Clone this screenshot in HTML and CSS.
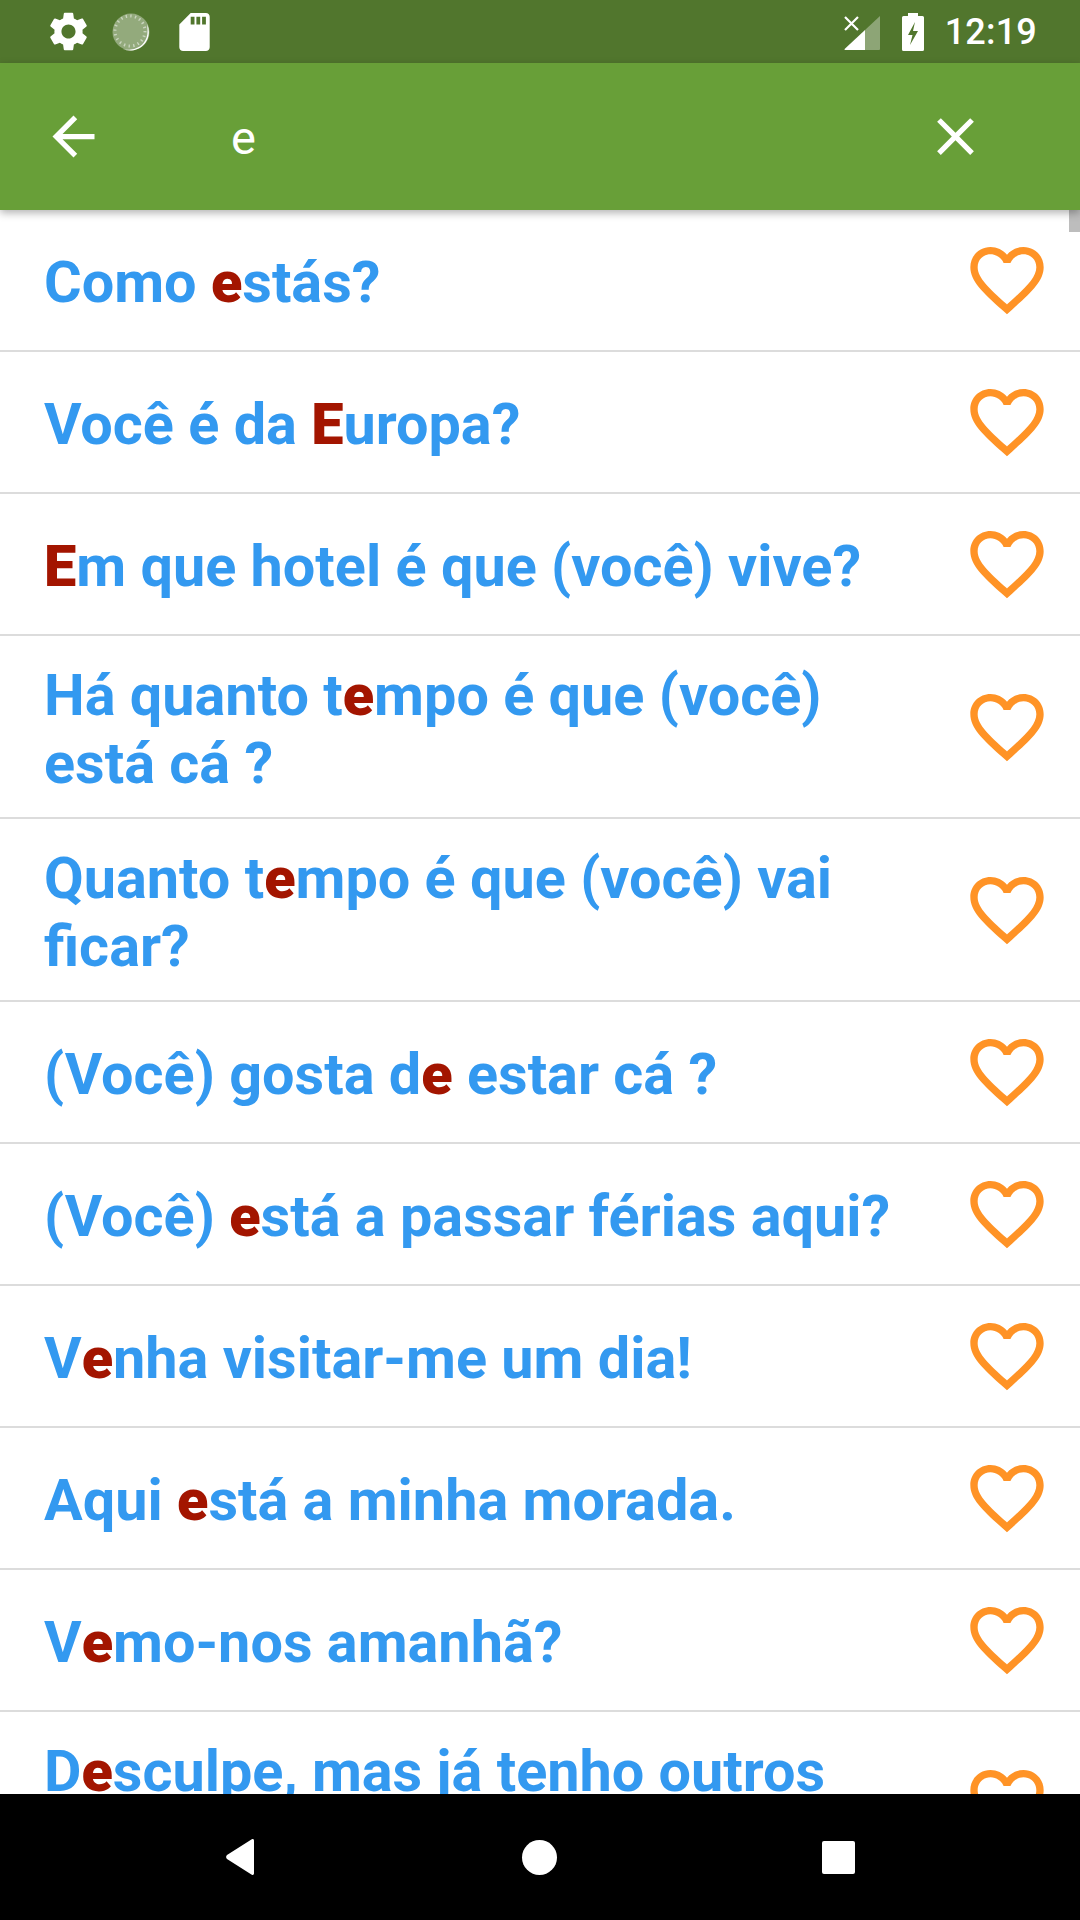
FILE: index.html
```html
<!DOCTYPE html>
<html lang="pt">
<head>
    <meta charset="utf-8"/>
    <title>Frases</title>
    <link rel="stylesheet" href="styles.css">
</head>
<body>
    <svg class="defs" width="0" height="0">
        <defs>
            <path id="heart" d="M16.5 3c-1.74 0-3.41.81-4.5 2.09C10.91 3.81 9.24 3 7.5 3 4.42 3 2 5.42 2 8.5c0 3.78 3.4 6.86 8.55 11.54L12 21.35l1.45-1.32C18.6 15.36 22 12.28 22 8.5 22 5.42 19.58 3 16.5 3zm-4.4 15.55l-.1.1-.1-.1C7.14 14.24 4 11.39 4 8.5 4 6.5 5.5 5 7.5 5c1.54 0 3.04.99 3.57 2.36h1.87C13.46 5.99 14.96 5 16.5 5c2 0 3.5 1.5 3.5 3.5 0 2.89-3.14 5.74-7.9 10.05z"/>
        </defs>
    </svg>
    <div class="screen">
        <div class="status-bar">
            <svg class="ic-gear" viewBox="0 0 24 24"><path d="M19.14 12.94c.04-.3.06-.61.06-.94 0-.32-.02-.64-.07-.94l2.03-1.58c.18-.14.23-.41.12-.61l-1.92-3.32c-.12-.22-.37-.29-.59-.22l-2.39.96c-.5-.38-1.03-.7-1.62-.94l-.36-2.54c-.04-.24-.24-.41-.48-.41h-3.84c-.24 0-.43.17-.47.41l-.36 2.54c-.59.24-1.13.57-1.62.94l-2.39-.96c-.22-.08-.47 0-.59.22L2.74 8.87c-.12.21-.08.47.12.61l2.03 1.58c-.05.3-.09.63-.09.94s.02.64.07.94l-2.03 1.58c-.18.14-.23.41-.12.61l1.92 3.32c.12.22.37.29.59.22l2.39-.96c.5.38 1.03.7 1.62.94l.36 2.54c.05.24.24.41.48.41h3.84c.24 0 .44-.17.47-.41l.36-2.54c.59-.24 1.13-.56 1.62-.94l2.39.96c.22.08.47 0 .59-.22l1.92-3.32c.12-.22.07-.47-.12-.61l-2.01-1.58zM12 15.6c-1.98 0-3.6-1.62-3.6-3.6s1.62-3.6 3.6-3.6 3.6 1.62 3.6 3.6-1.62 3.6-3.6 3.6z"/></svg>
            <svg class="ic-sync" viewBox="0 0 38 38">
                <circle cx="19" cy="19" r="18.5" fill="#fff" fill-opacity=".38"/>
                <circle cx="18" cy="18" r="15" fill="none" stroke="#fff" stroke-opacity=".5" stroke-width="3" stroke-dasharray="1.4 3.3"/>
                <path d="M35 11a18.500 18.500 0 0 1-24 25c3 .8 5 .8 8 .4 9-1 15-7 16.300-15 .4-4 .3-7-.3-10.400z" fill="#fff"/>
            </svg>
            <svg class="ic-sd" viewBox="4 2 16 20"><path d="M18 2h-8L4.020 8 4 20c0 1.100.9 2 2 2h12c1.100 0 2-.9 2-2V4c0-1.100-.9-2-2-2zm-6 6h-2V4h2v4zm3 0h-2V4h2v4zm3 0h-2V4h2v4z"/></svg>
            <div class="status-spacer"></div>
            <svg class="ic-signal" viewBox="0 0 36 36">
                <path d="M36 1v33a1 1 0 0 1-1 1H21V15z" fill="#fff" fill-opacity=".35"/>
                <path d="M21 15v20H1a.6.6 0 0 1-.4-1z" fill="#fff"/>
                <path d="M1 2l13 13M14 2L1 15" stroke="#fff" stroke-width="2.2" fill="none"/>
            </svg>
            <svg class="ic-battery" viewBox="0 0 22 38"><path fill-rule="evenodd" d="M6 0h10v3h4.500a1.500 1.500 0 0 1 1.500 1.500v32a1.500 1.500 0 0 1-1.500 1.500h-19A1.500 1.500 0 0 1 0 36.500v-32A1.500 1.500 0 0 1 1.500 3H6zM13 9l-7 13h4.500L8 32l8-14h-5z"/></svg>
            <span class="clock">12:19</span>
        </div>
        <div class="app-bar">
            <svg class="ic-bar" viewBox="0 0 24 24"><path d="M20 11H7.830l5.590-5.590L12 4l-8 8 8 8 1.410-1.410L7.830 13H20v-2z"/></svg>
            <div class="search-text">e</div>
            <svg class="ic-bar" viewBox="0 0 24 24"><path d="M19 6.410L17.590 5 12 10.590 6.410 5 5 6.410 10.590 12 5 17.590 6.410 19 12 13.410 17.590 19 19 17.590 13.410 12z"/></svg>
        </div>
        <div class="list">
            <div class="scroll-thumb"></div>
            <div class="row">
                <div class="phrase">Como <b>e</b>stás?</div>
                <svg class="heart" viewBox="0 0 24 24"><use href="#heart"/></svg>
            </div>
            <div class="row">
                <div class="phrase">Você é da <b>E</b>uropa?</div>
                <svg class="heart" viewBox="0 0 24 24"><use href="#heart"/></svg>
            </div>
            <div class="row">
                <div class="phrase"><b>E</b>m que hotel é que (você) vive?</div>
                <svg class="heart" viewBox="0 0 24 24"><use href="#heart"/></svg>
            </div>
            <div class="row">
                <div class="phrase">Há quanto t<b>e</b>mpo é que (você) está cá ?</div>
                <svg class="heart" viewBox="0 0 24 24"><use href="#heart"/></svg>
            </div>
            <div class="row">
                <div class="phrase">Quanto t<b>e</b>mpo é que (você) vai ficar?</div>
                <svg class="heart" viewBox="0 0 24 24"><use href="#heart"/></svg>
            </div>
            <div class="row">
                <div class="phrase">(Você) gosta d<b>e</b> estar cá ?</div>
                <svg class="heart" viewBox="0 0 24 24"><use href="#heart"/></svg>
            </div>
            <div class="row">
                <div class="phrase">(Você) <b>e</b>stá a passar férias aqui?</div>
                <svg class="heart" viewBox="0 0 24 24"><use href="#heart"/></svg>
            </div>
            <div class="row">
                <div class="phrase">V<b>e</b>nha visitar-me um dia!</div>
                <svg class="heart" viewBox="0 0 24 24"><use href="#heart"/></svg>
            </div>
            <div class="row">
                <div class="phrase">Aqui <b>e</b>stá a minha morada.</div>
                <svg class="heart" viewBox="0 0 24 24"><use href="#heart"/></svg>
            </div>
            <div class="row">
                <div class="phrase">V<b>e</b>mo-nos amanhã?</div>
                <svg class="heart" viewBox="0 0 24 24"><use href="#heart"/></svg>
            </div>
            <div class="row">
                <div class="phrase">D<b>e</b>sculpe, mas já tenho outros planos.</div>
                <svg class="heart" viewBox="0 0 24 24"><use href="#heart"/></svg>
            </div>
        </div>
        <div class="nav-bar">
            <svg class="ic-back" viewBox="0 0 30 36"><path d="M28 1.500v33a1.500 1.500 0 0 1-2.600 1L1 20a3 3 0 0 1 0-4L25.400.500a1.500 1.500 0 0 1 2.600 1z"/></svg>
            <div class="nav-home"></div>
            <div class="nav-recent"></div>
        </div>
    </div>
</body>
</html>
```

FILE: styles.css
```css
body {
    margin: 0;
    font-family: Roboto, "Noto Sans", sans-serif;
    background: #fff;
}
.defs {
    position: absolute;
}
.screen {
    display: flex;
    flex-direction: column;
    width: 1080px;
    height: 1920px;
    overflow: hidden;
}
.status-bar {
    display: flex;
    align-items: center;
    flex: none;
    height: 63px;
    padding: 0 43px 0 45px;
    box-sizing: border-box;
    background: #51762d;
    color: #fff;
    fill: #fff;
}
.ic-gear {
    width: 47px;
    height: 47px;
}
.ic-sync {
    width: 38px;
    height: 38px;
    margin-left: 20px;
}
.ic-sd {
    width: 31px;
    height: 38px;
    margin-left: 29px;
}
.status-spacer {
    flex: 1;
}
.ic-signal {
    width: 36px;
    height: 36px;
    margin-top: 2px;
}
.ic-battery {
    width: 22px;
    height: 38px;
    margin-left: 22px;
}
.clock {
    margin-left: 21px;
    font-size: 36px;
    font-weight: 500;
    letter-spacing: 0.2px;
}
.app-bar {
    position: relative;
    z-index: 1;
    display: flex;
    align-items: center;
    flex: none;
    height: 147px;
    padding: 0 93px 0 42px;
    background: #689f38;
    box-shadow: 0 3px 8px rgba(0, 0, 0, 0.3);
    fill: #fff;
}
.ic-bar {
    width: 63px;
    height: 63px;
}
.search-text {
    flex: 1;
    padding: 2px 0 0 126px;
    color: #fff;
    font-size: 47px;
}
.list {
    position: relative;
    flex: 1;
    overflow: hidden;
}
.scroll-thumb {
    position: absolute;
    top: 0;
    right: 0;
    width: 11px;
    height: 22px;
    background: #bdbdbd;
}
.row {
    display: flex;
    align-items: center;
    box-sizing: border-box;
    min-height: 142px;
    padding: 19.5px 29px 19.5px 44px;
    border-bottom: 2px solid #dcdcdc;
}
.phrase {
    flex: 1;
    padding-top: 6px;
    color: #3399f0;
    font-size: 57.6px;
    font-weight: 700;
    line-height: 68px;
}
.phrase b {
    color: #a31500;
}
.heart {
    flex: none;
    width: 88px;
    height: 88px;
    margin-left: 56px;
    fill: #ff9326;
}
.nav-bar {
    position: relative;
    flex: none;
    display: flex;
    align-items: center;
    height: 126px;
    padding-left: 226px;
    background: #000;
}
.ic-back {
    width: 30px;
    height: 36px;
    fill: #fff;
}
.nav-home {
    width: 35px;
    height: 35px;
    margin-left: 266px;
    border-radius: 50%;
    background: #fff;
}
.nav-recent {
    width: 33px;
    height: 33px;
    margin-left: 265px;
    border-radius: 2px;
    background: #fff;
}
```
